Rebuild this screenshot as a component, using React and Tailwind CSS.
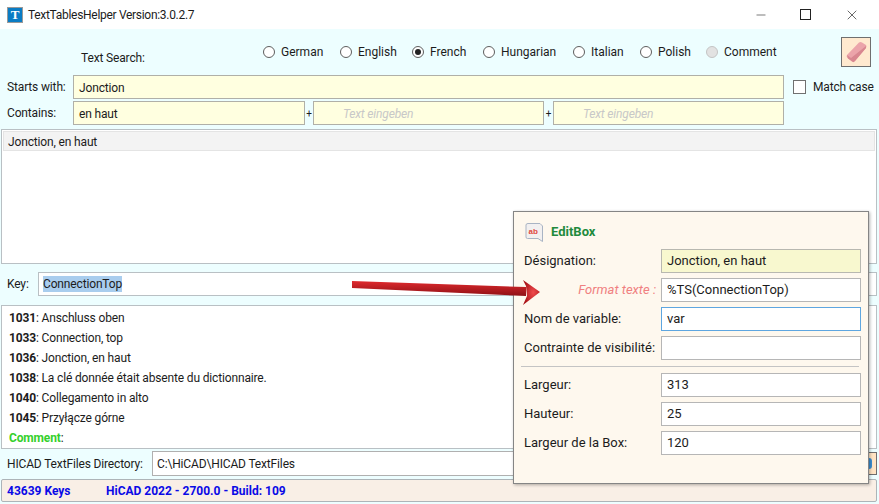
import { Minus, X } from 'lucide-react';

const LANGUAGES = [
  { label: 'German', width: 'w-[77px]' },
  { label: 'English', width: 'w-[72px]' },
  { label: 'French', width: 'w-[71px]', checked: true },
  { label: 'Hungarian', width: 'w-[90px]' },
  { label: 'Italian', width: 'w-[67px]' },
  { label: 'Polish', width: 'w-[66px]' },
  { label: 'Comment', width: 'w-[90px]', disabled: true },
];

const TRANSLATIONS = [
  { code: '1031', text: 'Anschluss oben' },
  { code: '1033', text: 'Connection, top' },
  { code: '1036', text: 'Jonction, en haut' },
  { code: '1038', text: 'La clé donnée était absente du dictionnaire.' },
  { code: '1040', text: 'Collegamento in alto' },
  { code: '1045', text: 'Przyłącze górne' },
];

function Radio({ label, width, checked, disabled }) {
  return (
    <div className={`flex items-center gap-[6px] ${width}`}>
      <span className={`w-[12px] h-[12px] rounded-full border flex items-center justify-center shrink-0 ${disabled ? 'bg-[#e2e2e2] border-[#c4c4c4]' : 'bg-white border-[#5e5e5e]'}`}>
        {checked && <span className="w-[6px] h-[6px] rounded-full bg-[#222]" />}
      </span>
      <span>{label}</span>
    </div>
  );
}

function YellowInput({ value, placeholder, className }) {
  return (
    <div className={`h-[24px] pt-[1px] bg-[#ffffe0] border border-[#b0b0a8] flex items-center ${className}`}>
      {value ? <span className="pl-[5px]">{value}</span> : <span className="pl-[29px] italic text-[#c8c8c8]">{placeholder}</span>}
    </div>
  );
}

function Field({ label, value, tone }) {
  const box = {
    yellow: 'bg-[#f8f8cf] border-[#b8b8b0]',
    focus: 'bg-white border-[#5ea6e0]',
  }[tone] || 'bg-white border-[#b6b6b6]';
  return (
    <div className="flex items-center h-[24px]">
      {tone === 'hint' ? (
        <span className="w-[137px] pr-[5px] text-right italic text-[#f08080]">{label}</span>
      ) : (
        <span className="w-[137px] whitespace-nowrap">{label}</span>
      )}
      <div className={`w-[200px] h-[24px] border flex items-center pl-[5px] ${box}`}>{value}</div>
    </div>
  );
}

function EraserIcon() {
  return (
    <svg width="24" height="24" viewBox="0 0 24 24">
      <path d="M3 15 L15 2.5 Q16.5 1.5 18 2.5 L22 5 Q23 6 22 8 L11 21 Q9.5 22.5 8 21.5 L3.5 18 Q2 16.5 3 15 Z" fill="#eba4aa" />
      <path d="M3 15 L7 18 L9 22 L4 18.5 Z M7 18 L22 6 L22 8 L11 21 Q9.5 22.5 9 22 Z" fill="#d88790" />
    </svg>
  );
}

function EditBoxIcon() {
  return (
    <svg width="20" height="21" viewBox="0 0 20 21">
      <path d="M2 3 Q2 1.5 4 1.5 L16 1.5 L18.5 4 L18.5 19.5 L14 16.5 L3.5 16.5 Q2 16.5 2 15 Z" fill="#f2f0f0" stroke="#a9b4c4" />
      <text x="4.5" y="11.5" fontSize="8" fontWeight="700" fill="#e0483e" fontFamily="'Liberation Sans', sans-serif">ab</text>
    </svg>
  );
}

function Arrow() {
  return (
    <svg className="absolute left-[350px] top-[276px]" width="195" height="32" viewBox="0 0 195 32">
      <defs>
        <linearGradient id="shaft" x1="0" y1="0" x2="0" y2="1">
          <stop offset="0" stopColor="#e02a2e" />
          <stop offset="1" stopColor="#8e1015" />
        </linearGradient>
        <radialGradient id="head" cx="0.6" cy="0.5" r="0.6">
          <stop offset="0" stopColor="#ef4a4c" />
          <stop offset="1" stopColor="#a81217" />
        </radialGradient>
      </defs>
      <path d="M2 5 L176 11 L176 20 L2 12 Z" fill="url(#shaft)" />
      <path d="M173 4 L190 16 L173 29 L177 20 L176 10 Z" fill="url(#head)" />
    </svg>
  );
}

export default function App() {
  return (
    <div className="relative w-[879px] h-[504px] overflow-hidden bg-white text-[12px] tracking-[-0.15px] text-[#1c1c1c] font-['Roboto',sans-serif]">
      <div className="h-[29px] flex items-center pl-[7px]">
        <div className="w-[16px] h-[16px] bg-[#0a7cc4] border border-[#9a9a9a] flex items-center justify-center text-white font-bold text-[13px] font-['Liberation_Serif',serif]">T</div>
        <span className="ml-[5px] tracking-[-0.3px]">TextTablesHelper Version:3.0.2.7</span>
        <div className="ml-auto flex items-center">
          <Minus size={14} strokeWidth={1} className="mr-[32px]" />
          <span className="w-[11px] h-[11px] border border-[#222] mr-[33px]" />
          <X size={16} strokeWidth={1} className="mr-[19px]" />
        </div>
      </div>

      <div className="h-[475px] bg-[#edfeff] px-[1px] flex flex-col">
        <div className="h-[46px] flex">
          <span className="ml-[80px] mt-[20px] w-[182px]">Text Search:</span>
          <div className="flex items-center h-[46px] pb-[1px] tracking-normal">
            {LANGUAGES.map((lang) => (
              <Radio key={lang.label} {...lang} />
            ))}
          </div>
          <button className="ml-[45px] mt-[8px] w-[30px] h-[30px] bg-[#ffe9cf] border border-[#6f6f6f] flex items-center justify-center">
            <EraserIcon />
          </button>
        </div>

        <div className="flex items-center h-[24px]">
          <span className="w-[72px] pl-[6px]">Starts with:</span>
          <YellowInput value="Jonction" className="w-[711px]" />
          <span className="ml-[9px] w-[13px] h-[14px] bg-white border border-[#707070]" />
          <span className="ml-[7px] whitespace-nowrap">Match case</span>
        </div>

        <div className="flex items-center h-[24px] mt-[2px]">
          <span className="w-[72px] pl-[6px]">Contains:</span>
          <YellowInput value="en haut" className="w-[232px]" />
          <span className="w-[8px] text-center text-[10px]">+</span>
          <YellowInput placeholder="Text eingeben" className="w-[231px]" />
          <span className="w-[9px] text-center text-[10px]">+</span>
          <YellowInput placeholder="Text eingeben" className="w-[231px]" />
        </div>

        <div className="mt-[4px] h-[135px] bg-white border border-[#b9c0c4] p-[1px] mr-[1px]">
          <div className="h-[20px] pt-[2px] bg-[#f3f3f3] border border-[#e4e4e4] flex items-center pl-[4px]">Jonction, en haut</div>
        </div>

        <div className="mt-[8px] flex items-center h-[24px]">
          <span className="w-[37px] pl-[6px]">Key:</span>
          <div className="flex-1 h-[24px] mr-[1px] bg-white border border-[#b9c0c4] flex items-center pl-[4px]">
            <span className="bg-[#a9cdee] leading-[16px]">ConnectionTop</span>
          </div>
        </div>

        <div className="mt-[9px] h-[144px] bg-white border border-[#b9c0c4] mr-[1px] pl-[7px] pt-[2px]">
          {TRANSLATIONS.map((row) => (
            <div key={row.code} className="h-[20px] flex items-center whitespace-pre">
              <b>{row.code}</b>: {row.text}
            </div>
          ))}
          <div className="h-[20px] flex items-center">
            <b className="text-[#35d02c]">Comment</b>:
          </div>
        </div>

        <div className="mt-[2px] h-[25px] flex items-center">
          <span className="w-[151px] pl-[6px] whitespace-nowrap">HICAD TextFiles Directory:</span>
          <div className="w-[716px] h-[25px] bg-white border border-[#b0b0b0] flex items-center pl-[4px]">C:\HiCAD\HICAD TextFiles</div>
          <div className="w-[9px] h-[23px] bg-[#ffe4c4] border border-[#6f6f6f] flex items-center">
            <span className="w-[3px] h-[11px] rounded-r-full bg-[#3d8fd1]" />
          </div>
        </div>

        <div className="mt-[3px] h-[23px] bg-[#f9efe6] border border-[#adb4b8] rounded-[2px] mr-[1px] flex items-center font-bold tracking-normal text-[#0a0ae6]">
          <span className="w-[104px] pl-[5px]">43639 Keys</span>
          <span>HiCAD 2022 - 2700.0 - Build: 109</span>
        </div>
      </div>

      <div className="absolute left-[513px] top-[211px] w-[356px] h-[273px] bg-[#fef8ee] border border-[#858585] shadow-[1px_1px_3px_rgba(0,0,0,0.3)] pl-[10px] text-[13px] tracking-normal">
        <div className="h-[37px] flex items-center gap-[7px] pt-[3px]">
          <EditBoxIcon />
          <span className="font-bold text-[#218a3c]">EditBox</span>
        </div>
        <div className="flex flex-col gap-[5px]">
          <Field label="Désignation:" value="Jonction, en haut" tone="yellow" />
          <Field label="Format texte :" value="%TS(ConnectionTop)" tone="hint" />
          <Field label="Nom de variable:" value="var" tone="focus" />
          <Field label="Contrainte de visibilité:" value="" />
        </div>
        <div className="h-px bg-[#c4c4c4] mt-[6px] mb-[6px] w-[338px] ml-[-3px]" />
        <div className="flex flex-col gap-[5px]">
          <Field label="Largeur:" value="313" />
          <Field label="Hauteur:" value="25" />
          <Field label="Largeur de la Box:" value="120" />
        </div>
      </div>

      <Arrow />
    </div>
  );
}
